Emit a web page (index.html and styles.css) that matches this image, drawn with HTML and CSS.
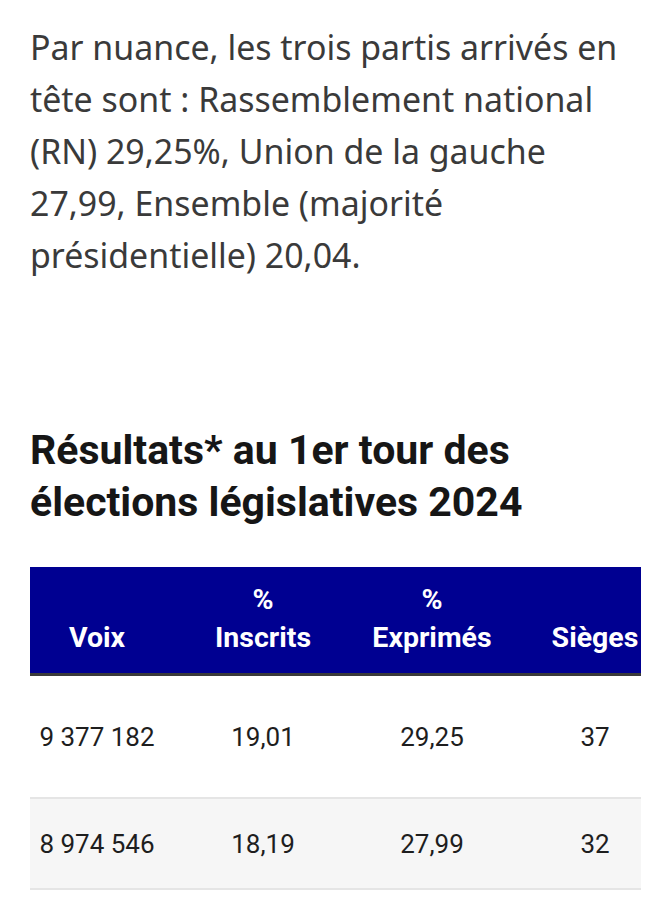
FILE: index.html
```html
<!DOCTYPE html>
<html lang="fr">
<head>
<meta charset="utf-8">
<link rel="stylesheet" href="styles.css">
</head>
<body>
<main class="content">
  <p class="lead">Par nuance, les trois partis arrivés en tête sont : Rassemblement national (RN) 29,25%, Union de la gauche 27,99, Ensemble (majorité présidentielle) 20,04.</p>
  <h2 class="title">Résultats* au 1er tour des élections législatives 2024</h2>
  <div class="table-wrap">
    <table class="results">
      <colgroup>
        <col class="c1"><col class="c2"><col class="c3"><col class="c4">
      </colgroup>
      <thead>
        <tr>
          <th>Voix</th>
          <th>%<br>Inscrits</th>
          <th>%<br>Exprimés</th>
          <th>Sièges</th>
        </tr>
      </thead>
      <tbody>
        <tr class="tall">
          <td>9 377 182</td>
          <td>19,01</td>
          <td>29,25</td>
          <td>37</td>
        </tr>
        <tr class="alt">
          <td>8 974 546</td>
          <td>18,19</td>
          <td>27,99</td>
          <td>32</td>
        </tr>
      </tbody>
    </table>
  </div>
</main>
</body>
</html>
```

FILE: styles.css
```css
html, body {
  margin: 0;
  padding: 0;
  background: #ffffff;
}

.content {
  padding: 21px 31px 0 30px;
}

.lead {
  margin: 0;
  font-family: "Noto Sans", "DejaVu Sans", sans-serif;
  font-size: 33.9px;
  line-height: 52px;
  color: #3a3a3a;
}

.title {
  margin: 143px 0 0 0;
  font-family: Roboto, "Liberation Sans", sans-serif;
  font-weight: 700;
  font-size: 41px;
  line-height: 52px;
  color: #161616;
}

.table-wrap {
  margin-top: 39px;
  overflow: hidden;
}

.results {
  border-collapse: collapse;
  table-layout: fixed;
  width: 658px;
  font-family: Roboto, "Liberation Sans", sans-serif;
  font-size: 26px;
}

.c1 { width: 134px; }
.c2 { width: 198px; }
.c3 { width: 140px; }
.c4 { width: 186px; }

.results th {
  background: #000091;
  color: #ffffff;
  font-weight: 700;
  font-size: 28.5px;
  line-height: 38px;
  padding: 14px 0 16px 0;
  vertical-align: bottom;
  text-align: center;
  border-bottom: 3px solid #3a3a3a;
}

.results td {
  text-align: center;
  color: #1e1e1e;
  height: 89px;
  padding: 0;
  border-bottom: 2px solid #e5e5e5;
}

.results tr.tall td {
  height: 121px;
}

.results tr.alt td {
  background: #f6f6f6;
}
```
